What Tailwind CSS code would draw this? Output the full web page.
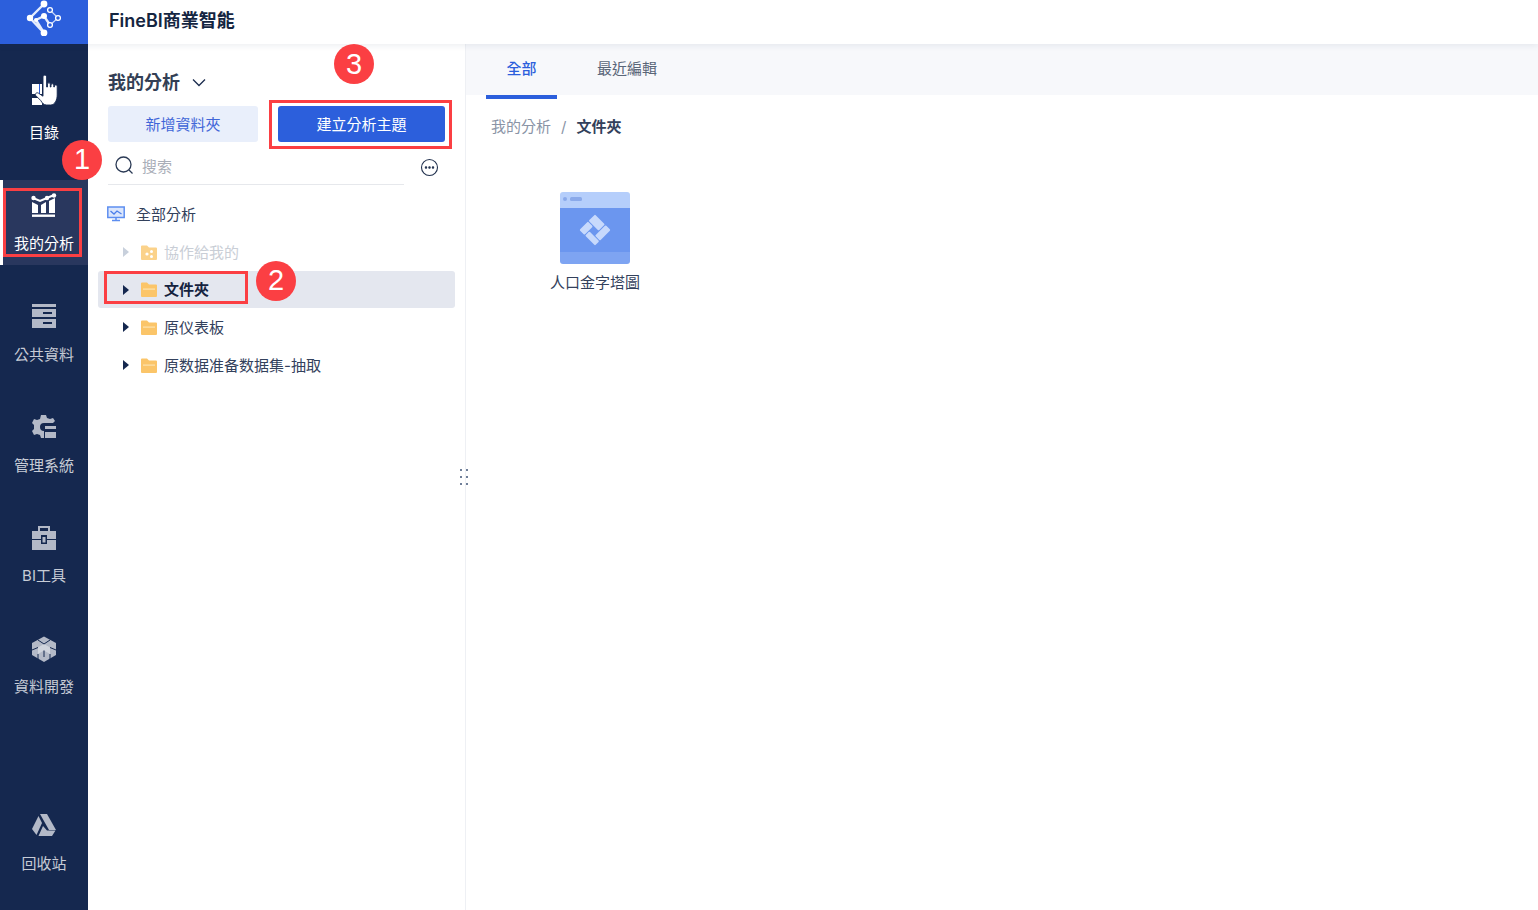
<!DOCTYPE html>
<html lang="zh-Hant">
<head>
    <meta charset="UTF-8">
    <title>FineBI</title>
    <script src="https://cdn.jsdelivr.net/npm/@tailwindcss/browser@4"></script>
</head>
<body class="bg-white font-['Inter','Noto_Sans_CJK_TC',sans-serif] text-[15px] text-[#1c2d4f] overflow-hidden">
<div class="relative h-[910px] w-[1538px] flex flex-col">
    <!-- top bar -->
    <header class="h-[44px] flex shrink-0 shadow-[0_2px_6px_rgba(30,50,90,0.08)] relative z-10 bg-white">
        <div class="w-[88px] bg-[#2c5fdc] flex items-start justify-center">
            <svg width="36" height="36" viewBox="0 0 36 36" fill="none">
                <path d="M18 4 L4 18 L18 33 L10 20 L18 16 L24 25" stroke="#e4ecfd" stroke-width="2.4"/>
                <path d="M24 10 L32 18 L24 25" stroke="#c9d9fa" stroke-width="1.2"/>
                <circle cx="18" cy="4" r="3.4" fill="#fff"/><circle cx="4" cy="18" r="3.2" fill="#fff"/><circle cx="18" cy="33" r="3.4" fill="#fff"/><circle cx="18" cy="16" r="3" fill="#fff"/><circle cx="10" cy="20" r="2" fill="#fff"/>
                <circle cx="24" cy="10" r="2.4" fill="#2c5fdc" stroke="#fff" stroke-width="1.3"/><circle cx="32" cy="18" r="2.4" fill="#2c5fdc" stroke="#fff" stroke-width="1.3"/><circle cx="24" cy="25" r="2.4" fill="#2c5fdc" stroke="#fff" stroke-width="1.3"/>
            </svg>
        </div>
        <div class="pl-[21px] pb-[4px] flex items-center text-[18px] font-semibold text-[#142541]">FineBI商業智能</div>
    </header>

    <div class="flex flex-1 min-h-0">
        <!-- sidebar -->
        <nav class="w-[88px] bg-[#15284f] flex flex-col gap-[26px] pt-[25px] pb-[25px] text-[#c7ccd6] shrink-0">
            <a class="h-[85px] flex flex-col items-center text-white">
                <svg class="mt-[3px]" width="36" height="36" viewBox="0 0 36 36">
                    <rect x="6" y="12" width="10" height="10" fill="#fff"/><rect x="6" y="26" width="10" height="7" fill="#fff"/>
                    <rect x="13" y="12" width="1" height="10" fill="#2c5fdc"/>
                    <path d="M17 5c0-2.500 3.600-2.500 3.600 0V15h.9v-3c0-1.600 2.800-1.600 2.800 0v3h.7v-2c0-1.600 2.800-1.600 2.800 0v2h.6v-1c0-1.500 2.800-1.500 2.800 0v9c0 5-2.500 10-6.500 10h-4c-3 0-4.500-2-6-4.500l-5-5c-1.200-1.700 1-3.500 2.800-2.300l4.500 3z" fill="#fff" stroke="#15284f" stroke-width=".9"/>
                </svg>
                <span class="mt-[15px] leading-[20px]">目錄</span>
            </a>
            <a class="h-[85px] flex flex-col items-center text-white bg-[#29375e] border-l-[3px] border-white">
                <svg class="mt-[13px] ml-[-3px]" width="26" height="26" viewBox="0 0 26 26" fill="#fff">
                    <path d="M2 5 L9 8 L16 5 L23 2" fill="none" stroke="#fff" stroke-width="2"/>
                    <circle cx="2.500" cy="5" r="2.200"/><circle cx="16" cy="5" r="2.200"/><circle cx="23" cy="2.500" r="2.200"/>
                    <path d="M1 9 L7 12 V20 H1z"/><path d="M10 12 L15 9 V20 H10z"/><path d="M18 8 L24 5 V20 H18z"/>
                    <rect x="1" y="21.500" width="23" height="2.400"/>
                </svg>
                <span class="mt-[15px] ml-[-3px] leading-[20px]">我的分析</span>
            </a>
            <a class="h-[85px] flex flex-col items-center">
                <svg class="mt-[12px]" width="26" height="26" viewBox="0 0 26 26" fill="#b3b9c7">
                    <rect x="1" y="1" width="24" height="3"/>
                    <path d="M1 6h24v8H1z M12 9v2h9V9z" fill-rule="evenodd"/>
                    <path d="M1 16h24v9H1z M12 19v2h9v-2z" fill-rule="evenodd"/>
                </svg>
                <span class="mt-[16px] leading-[20px]">公共資料</span>
            </a>
            <a class="h-[85px] flex flex-col items-center">
                <svg class="mt-[12px]" width="26" height="26" viewBox="0 0 26 26" fill="#b3b9c7">
                    <path d="M10 1h5l1 3 3 1 3-1 2 3-2 2H13a4 4 0 1 0 0 8v7h-3l-1-3-3-1-3 1-2-4 2-2v-4l-2-2 2-4 3 1 3-1z"/>
                    <rect x="14" y="12" width="11" height="3"/><rect x="14" y="18" width="11" height="6"/>
                </svg>
                <span class="mt-[16px] leading-[20px]">管理系統</span>
            </a>
            <a class="h-[85px] flex flex-col items-center">
                <svg class="mt-[12px]" width="26" height="26" viewBox="0 0 26 26" fill="#b3b9c7">
                    <path d="M7 6V1h12v5h-2V3H9v3z"/>
                    <path d="M1 6h24v19H1z M10 10v9h6v-9z" fill-rule="evenodd"/>
                    <rect x="11.500" y="12" width="3" height="5.500"/>
                    <path d="M1 14.500H10 M16 14.500H25" stroke="#15284f" stroke-width="1"/>
                </svg>
                <span class="mt-[15px] leading-[20px]">BI工具</span>
            </a>
            <a class="h-[85px] flex flex-col items-center">
                <svg class="mt-[12px]" width="26" height="26" viewBox="0 0 26 26" fill="#b3b9c7">
                    <path d="M13 0.500 L25 7 V19 L13 26 L1 19 V7z"/>
                    <path d="M13 8 L19 11.500 V18 L13 14.500 L7 18 V11.500z" fill="#d0d4dd"/>
                    <path d="M7 4 L13 8 L19 4 M1 14 L7 11.500 M25 14 L19 11.500 M7 18 V23 M19 18 V23 M13 14.500 V21" fill="none" stroke="#15284f" stroke-width="1"/>
                </svg>
                <span class="mt-[15px] leading-[20px]">資料開發</span>
            </a>
            <a class="h-[85px] flex flex-col items-center mt-auto">
                <svg class="mt-[12px]" width="26" height="26" viewBox="0 0 26 26" fill="#b3b9c7">
                    <path d="M9 2 H16 L25 18 H18z"/>
                    <path d="M7.500 4 L11 11 L5.500 23 L1 17z"/>
                    <path d="M12 14 L16 18.500 H24.500 L21 24 H7.500z"/>
                </svg>
                <span class="mt-[16px] leading-[20px]">回收站</span>
            </a>
        </nav>

        <!-- folder panel -->
        <aside class="w-[378px] shrink-0 border-r border-[#eef0f4] pt-[25px] relative">
            <div class="pl-[20px] flex items-center h-[27px]">
                <span class="text-[18px] font-semibold text-[#333f55]">我的分析</span>
                <svg class="ml-[12px]" width="14" height="9" viewBox="0 0 14 9" fill="none" stroke="#1c2d4f" stroke-width="1.300"><path d="M1 1.500 L7 7.500 L13 1.500"/></svg>
            </div>
            <div class="pl-[20px] flex gap-[20px] mt-[10px]">
                <button class="w-[150px] h-[36px] rounded-[3px] bg-[#e9effb] text-[#3f66d8] pt-[2px]">新增資料夾</button>
                <button class="w-[167px] h-[36px] rounded-[3px] bg-[#2c5fdc] text-white pt-[2px]">建立分析主題</button>
            </div>
            <div class="ml-[20px] w-[296px] h-[39px] mt-[4px] flex items-center border-b border-[#e6e8ec] pl-[6px]">
                <svg width="20" height="20" viewBox="0 0 20 20" fill="none" stroke="#2b3a55" stroke-width="1.300"><circle cx="9.500" cy="9.500" r="7.500"/><path d="M15 15 L18.500 18.500"/></svg>
                <span class="ml-[8px] pt-[5px] text-[#a9aeb8]">搜索</span>
            </div>
            <svg class="absolute left-[332px] top-[114px]" width="19" height="19" viewBox="0 0 19 19" fill="none" stroke="#22324f" stroke-width="1.100"><circle cx="9.500" cy="9.500" r="8"/><circle cx="6" cy="9.500" r=".7" fill="#22324f"/><circle cx="9.500" cy="9.500" r=".7" fill="#22324f"/><circle cx="13" cy="9.500" r=".7" fill="#22324f"/></svg>

            <div class="mt-[10px] h-[38px] flex items-center pl-[19px]">
                <svg width="18" height="16" viewBox="0 0 18 16" fill="none"><rect x=".8" y="1" width="16.400" height="10.500" fill="#dbe6fc" stroke="#5d8ef0" stroke-width="1.500"/><path d="M3.500 5 L7 8 L10 5 L14.500 8" stroke="#4c7fea" stroke-width="1.300"/><path d="M5 14.500 H13 M9 11.500 V14.500" stroke="#5d8ef0" stroke-width="1.500"/></svg>
                <span class="ml-[11px] pt-[2px] text-[#33415c]">全部分析</span>
            </div>
            <div class="h-[38px] flex items-center pl-[34px] text-[#c9ced6]">
                <svg width="8" height="10" viewBox="0 0 8 10"><path d="M1 0 L7 5 L1 10z" fill="#c8d0dc"/></svg>
                <svg class="ml-[11px]" width="16" height="15" viewBox="0 0 16 15"><path d="M0 1.500 Q0 .5 1 .5 H6 L8 2.500 H15 Q16 2.500 16 3.500 V14 Q16 15 15 15 H1 Q0 15 0 14z" fill="#fbd28a"/><circle cx="6" cy="9" r="1.600" fill="#fff"/><circle cx="10.500" cy="6.500" r="1.500" fill="#fff"/><circle cx="10.500" cy="11.500" r="1.500" fill="#fff"/></svg>
                <span class="ml-[7px] pt-[2px]">協作給我的</span>
            </div>
            <div class="mx-[10px] h-[37px] flex items-center pl-[24px] bg-[#e4e7ef] rounded-[3px] font-semibold text-[#15233f]">
                <svg width="8" height="10" viewBox="0 0 8 10"><path d="M1 0 L7 5 L1 10z" fill="#15284f"/></svg>
                <svg class="ml-[11px]" width="16" height="15" viewBox="0 0 16 15"><path d="M0 1.500 Q0 .5 1 .5 H6 L8 2.500 H15 Q16 2.500 16 3.500 V14 Q16 15 15 15 H1 Q0 15 0 14z" fill="#fbc569"/><rect x="2" y="6.500" width="12" height="1.200" fill="#fde3b0"/></svg>
                <span class="ml-[7px] pt-[2px]">文件夾</span>
            </div>
            <div class="h-[38px] flex items-center pl-[34px] text-[#33415c]">
                <svg width="8" height="10" viewBox="0 0 8 10"><path d="M1 0 L7 5 L1 10z" fill="#15284f"/></svg>
                <svg class="ml-[11px]" width="16" height="15" viewBox="0 0 16 15"><path d="M0 1.500 Q0 .5 1 .5 H6 L8 2.500 H15 Q16 2.500 16 3.500 V14 Q16 15 15 15 H1 Q0 15 0 14z" fill="#fbc569"/><rect x="2" y="6.500" width="12" height="1.200" fill="#fde3b0"/></svg>
                <span class="ml-[7px] pt-[2px]">原仪表板</span>
            </div>
            <div class="h-[38px] flex items-center pl-[34px] text-[#33415c]">
                <svg width="8" height="10" viewBox="0 0 8 10"><path d="M1 0 L7 5 L1 10z" fill="#15284f"/></svg>
                <svg class="ml-[11px]" width="16" height="15" viewBox="0 0 16 15"><path d="M0 1.500 Q0 .5 1 .5 H6 L8 2.500 H15 Q16 2.500 16 3.500 V14 Q16 15 15 15 H1 Q0 15 0 14z" fill="#fbc569"/><rect x="2" y="6.500" width="12" height="1.200" fill="#fde3b0"/></svg>
                <span class="ml-[7px] pt-[2px]">原数据准备数据集-抽取</span>
            </div>
            <!-- resize handle -->
            <div class="absolute left-[372px] top-[425px] grid grid-cols-2 gap-x-[6px] gap-y-[5px]">
                <i class="w-[2px] h-[2px] bg-[#6f7f99]"></i><i class="w-[2px] h-[2px] bg-[#6f7f99]"></i>
                <i class="w-[2px] h-[2px] bg-[#6f7f99]"></i><i class="w-[2px] h-[2px] bg-[#6f7f99]"></i>
                <i class="w-[2px] h-[2px] bg-[#6f7f99]"></i><i class="w-[2px] h-[2px] bg-[#6f7f99]"></i>
            </div>
        </aside>

        <!-- content -->
        <main class="flex-1 min-w-0">
            <div class="h-[51px] bg-[#f7f8fb] flex pl-[20px]">
                <div class="w-[71px] h-[55px] flex items-start justify-center pt-[14px] border-b-4 border-[#2c5fdc] text-[#2c5fdc] font-medium">全部</div>
                <div class="ml-[40px] pt-[14px] text-[#5a6679]">最近編輯</div>
            </div>
            <div class="mt-[22px] pl-[25px] flex items-center h-[20px]">
                <span class="text-[#8a94a6]">我的分析</span>
                <span class="mx-[10px] text-[#8a94a6]">/</span>
                <span class="font-semibold text-[#33415c]">文件夾</span>
            </div>
            <div class="ml-[69px] mt-[55px] w-[120px] flex flex-col items-center">
                <svg width="70" height="72" viewBox="0 0 70 72">
                    <path d="M3 0 H67 Q70 0 70 3 V16 H0 V3 Q0 0 3 0z" fill="#b5cefb"/>
                    <rect y="16" width="70" height="44" fill="#6b96ef"/>
                    <path d="M0 60 H70 V69 Q70 72 67 72 H3 Q0 72 0 69z" fill="#7ea4f2"/>
                    <circle cx="5" cy="7" r="2" fill="#8aa9ea"/><rect x="10" y="5" width="12" height="4" rx="1.500" fill="#8aa9ea"/>
                    <g fill="#c7d9fc" transform="translate(35 38) rotate(45)">
                        <rect x="-11" y="-11" width="14" height="9" rx="1"/>
                        <rect x="4" y="-11" width="7" height="15" rx="1"/>
                        <rect x="-3" y="5" width="14" height="6" rx="1"/>
                        <rect x="-11" y="-1" width="7" height="12" rx="1"/>
                    </g>
                </svg>
                <span class="mt-[8px] text-[#33415c]">人口金字塔圖</span>
            </div>
        </main>
    </div>

    <!-- annotations -->
    <div class="absolute left-[3px] top-[188px] w-[79px] h-[69px] border-[3px] border-[#fb3f43] z-20"></div>
    <div class="absolute left-[104px] top-[271px] w-[144px] h-[33px] border-[3px] border-[#fb3f43] z-20"></div>
    <div class="absolute left-[269px] top-[100px] w-[183px] h-[49px] border-[3px] border-[#fb3f43] z-20"></div>
    <div class="absolute left-[62px] top-[140px] w-[40px] h-[40px] rounded-full bg-[#fb3f43] text-white text-[29px] flex items-center justify-center z-20 font-['Liberation_Sans']">1</div>
    <div class="absolute left-[256px] top-[261px] w-[40px] h-[40px] rounded-full bg-[#fb3f43] text-white text-[29px] flex items-center justify-center z-20 font-['Liberation_Sans']">2</div>
    <div class="absolute left-[334px] top-[44px] w-[40px] h-[40px] rounded-full bg-[#fb3f43] text-white text-[29px] flex items-center justify-center z-20 font-['Liberation_Sans'] pt-[1px]">3</div>
</div>
</body>
</html>
